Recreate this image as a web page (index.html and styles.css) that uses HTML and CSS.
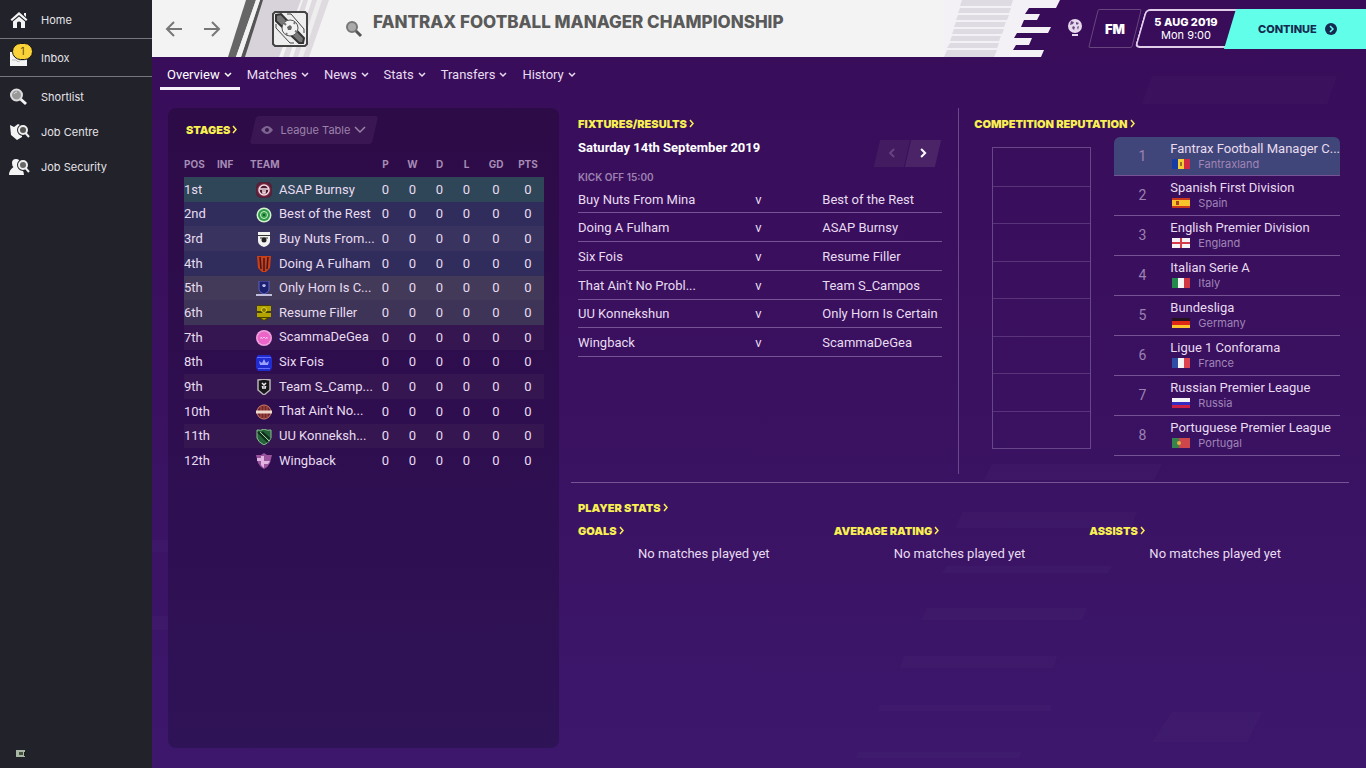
FILE: index.html
```
<!DOCTYPE html>
<html lang="en">
  <head>
    <meta charset="utf-8" />
    <meta name="viewport" content="width=device-width, initial-scale=1.0" />
    <title>Fantrax Football Manager Championship</title>
    <link rel="stylesheet" href="styles.css">
  </head>

  <body>
    <aside class="sidebar">
      <nav class="side-nav" aria-label="Main">
        <a class="side-item ruled" href="#">
          <svg width="20" height="18" viewBox="0 0 20 18" fill="#f4f4f4"><path d="M10 1L18.500 8.500L17 10L10 4L3 10L1.500 8.500ZM15 2h2v4l-2-2Z"/><path d="M4 10.500L10 5.500L16 10.500V17H12V11.500Q10 9.500 8 11.500V17H4Z"/></svg>
          <span>Home</span>
        </a>
        <a class="side-item ruled" href="#">
          <svg width="20" height="18" viewBox="0 0 20 18"><path d="M1 3h17v14H1Z" fill="#f4f4f4"/><path d="M3 11H7L9 13L12 11H16" stroke="#bbb" fill="none"/></svg>
          <b class="badge">1</b>
          <span>Inbox</span>
        </a>
        <a class="side-item" href="#">
          <svg width="20" height="18" viewBox="0 0 20 18"><path d="M11.500 11L17 16" stroke="#f4f4f4" stroke-width="3"/><circle cx="7.500" cy="7" r="5.500" fill="#999" stroke="#ddd" stroke-width="2"/><path d="M5 6Q6 4 8 4" stroke="#ddd" fill="none"/></svg>
          <span>Shortlist</span>
        </a>
        <a class="side-item" href="#">
          <svg width="22" height="18" viewBox="0 0 22 18"><path d="M1 2L5 4L9 1L13 3V14L8 17L2 12Z" fill="#f4f4f4"/><circle cx="14" cy="7" r="4" fill="#777" stroke="#22222b" stroke-width="4"/><circle cx="14" cy="7" r="4" fill="#555" stroke="#eee" stroke-width="2"/><path d="M16.500 10L20 14" stroke="#eee" stroke-width="2"/></svg>
          <span>Job Centre</span>
        </a>
        <a class="side-item" href="#">
          <svg width="22" height="18" viewBox="0 0 22 18"><path d="M3 5Q3 1 7 1Q11 1 11 5Q11 8 9 9Q15 11 15 17H0Q0 12 4.500 9Q3 8 3 5Z" fill="#f4f4f4"/><circle cx="14" cy="7" r="4" stroke="#22222b" stroke-width="4"/><circle cx="14" cy="7" r="4" fill="#666" stroke="#eee" stroke-width="2"/><path d="M16.500 10L20 14" stroke="#eee" stroke-width="2"/></svg>
          <span>Job Security</span>
        </a>
      </nav>
      <svg class="side-foot" width="10" height="8" viewBox="0 0 10 8"><rect width="9" height="7" fill="#a9b8a4"/><rect x="3" y="2" width="4" height="3" fill="#45523f"/><rect x="8" y="2" width="2" height="4" fill="#1c211b"/></svg>
    </aside>

    <div class="main">
      <svg class="backdrop" viewBox="0 0 1214 768" preserveAspectRatio="xMidYMid slice" aria-hidden="true">
        <g fill="#fff" fill-opacity=".02">
          <path d="M1000 76H1185L1175 104H990Z"/>
          <path d="M840 464H1010L1002 480H832ZM810 512H985L979 528H804ZM795 566H960L956 573H790ZM775 608H935L930 620H769ZM752 656H905L902 668H748ZM728 705H900L898 711H726ZM706 752H870L867 758H704Z"/>
          <path d="M1020 712H1110L1095 742H1000ZM0 540H120L116 552H0ZM0 616H102L98 630H0ZM240 720H330L322 736H232Z"/>
        </g>
      </svg>

      <header class="topbar">
        <div class="title-area">
          <button class="arrow" aria-label="Back"><svg width="18" height="18" viewBox="0 0 18 18"><path d="M9 2L2 9L9 16M2 9H17"/></svg></button>
          <button class="arrow" aria-label="Forward"><svg width="18" height="18" viewBox="0 0 18 18"><path d="M9 2L16 9L9 16M16 9H1"/></svg></button>
          <svg class="crest" width="110" height="57" viewBox="0 0 110 57">
            <path d="M33 0H75L53 57H13Z" fill="#d8d2db"/>
            <path d="M20 0H30L10 57H2Z" fill="#666"/>
            <path d="M34 0H37L19 57H15Z" fill="#555"/>
            <path d="M30 0H34L15 57H10Z" fill="#f2f2f2"/>
            <path d="M77 0H82L63 57H57ZM86 0H103L83 57H67Z" fill="#dedadf"/>
            <path d="M91 0H96L77 57H72Z" fill="#efeeef"/>
            <path d="M49 12H79L81 14V44L79 46H49L47 44V14Z" fill="#eee" stroke="#444" stroke-width="2"/>
            <path d="M50 15L55 14L78 38L77 43L73 43L50 21Z" fill="#777" stroke="#333" stroke-width="2"/>
            <path d="M50 24V28L64 43H68M61 14H65L78 29V33" fill="none" stroke="#444" stroke-width="1"/>
            <circle cx="64" cy="28" r="8" fill="#f2f2f2" stroke="#555" stroke-width="1"/>
            <path d="M64 25L66 27L65 30H62L61 27Z" fill="#666"/>
            <path d="M58 23L60 25M69 22L68 24M71 32L69 31M60 35L61 33" stroke="#777" stroke-width="2"/>
          </svg>
          <svg class="find" width="18" height="18" viewBox="0 0 18 18"><path d="M10.500 10.500L16 16" stroke="#555" stroke-width="3"/><circle cx="7" cy="7" r="5" fill="#aaa" stroke="#777" stroke-width="2"/></svg>
          <h1>FANTRAX FOOTBALL MANAGER CHAMPIONSHIP</h1>
        </div>
        <svg class="edge" width="118" height="57" viewBox="0 0 118 57">
          <path d="M0 0H116L112 8H85L81 14H96L93 20H80L77 27H107L104 33H73L70 38H88L85 45H72L69 50H100L97 57H0Z" fill="#f3f1f5"/>
          <path d="M18 0H69L67 6H16ZM16 8H67L65 13H14ZM14 15H65L63 20H12ZM12 22H62L60 27H10ZM10 29H60L58 34H8ZM8 36H57L55 41H6ZM6 43H55L53 48H3ZM3 50H53L50 57H0Z" fill="#dedce2"/>
        </svg>
        <div class="controls">
          <button class="world" aria-label="World"><svg width="16" height="18" viewBox="0 0 16 18"><circle cx="8" cy="8" r="7" fill="#e6d9ec"/><path d="M4 3L7 4L6 6L3 7ZM9 4L12 5L10 7L9 6ZM6 8L8 9L7 12L5 10ZM10 9L12 8L11 12Z" fill="#6b4885"/><path d="M5 17H11" stroke="#e6d9ec" stroke-width="2"/></svg></button>
          <button class="fm">FM</button>
          <button class="date"><b>5 AUG 2019</b><span>Mon 9:00</span></button>
          <button class="continue">CONTINUE <svg width="12" height="12" viewBox="0 0 12 12"><circle cx="6" cy="6" r="6" fill="#152a50"/><path d="M5 3L8 6L5 9" fill="none" stroke="#61ffea" stroke-width="1.500"/></svg></button>
        </div>
      </header>

      <nav class="tabs" aria-label="Competition">
        <a class="tab active" href="#">Overview <svg width="8" height="6" viewBox="0 0 8 6"><path d="M1 1L4 4L7 1"/></svg></a>
        <a class="tab" href="#">Matches <svg width="8" height="6" viewBox="0 0 8 6"><path d="M1 1L4 4L7 1"/></svg></a>
        <a class="tab" href="#">News <svg width="8" height="6" viewBox="0 0 8 6"><path d="M1 1L4 4L7 1"/></svg></a>
        <a class="tab" href="#">Stats <svg width="8" height="6" viewBox="0 0 8 6"><path d="M1 1L4 4L7 1"/></svg></a>
        <a class="tab" href="#">Transfers <svg width="8" height="6" viewBox="0 0 8 6"><path d="M1 1L4 4L7 1"/></svg></a>
        <a class="tab" href="#">History <svg width="8" height="6" viewBox="0 0 8 6"><path d="M1 1L4 4L7 1"/></svg></a>
      </nav>

      <main class="content">
        <section class="stages">
          <div class="stages-head">
            <h2><a href="#">STAGES<svg width="6" height="9" viewBox="0 0 6 9"><path d="M1 1L4 4.500L1 8"/></svg></a></h2>
            <div class="view-select">
              <svg class="eye" width="12" height="8" viewBox="0 0 12 8"><path d="M0 4Q6 -4 12 4Q6 12 0 4Z" fill="#7f6592"/><circle cx="6" cy="4" r="2" fill="#3a1753"/></svg>
              <select aria-label="View"><option>League Table</option></select>
              <svg class="caret" width="12" height="8" viewBox="0 0 12 8"><path d="M1 1L6 6L11 1"/></svg>
            </div>
          </div>

          <table class="league">
            <colgroup><col class="c-pos"><col class="c-inf"><col class="c-team"><col class="c-num"><col class="c-num"><col class="c-num"><col class="c-num"><col class="c-gd"><col class="c-gd"></colgroup>
            <thead>
              <tr><th>POS</th><th>INF</th><th>TEAM</th><th class="num">P</th><th class="num">W</th><th class="num">D</th><th class="num">L</th><th class="num">GD</th><th class="num">PTS</th></tr>
            </thead>
            <tbody>
              <tr class="champ"><td>1st</td><td></td><td class="team"><svg viewBox="0 0 16 16"><rect width="16" height="16" rx="5" fill="#54213b"/><circle cx="8" cy="8" r="7" fill="#79263f"/><circle cx="8" cy="8" r="5" fill="#4a1d35" stroke="#f5dfe6" stroke-width="1.500"/><path d="M4 7H12M7 8V11H9V8" stroke="#f5dfe6" fill="none" stroke-width="1.500"/></svg>ASAP Burnsy</td><td class="num">0</td><td class="num">0</td><td class="num">0</td><td class="num">0</td><td class="num">0</td><td class="num">0</td></tr>
              <tr class="promo"><td>2nd</td><td></td><td class="team"><svg viewBox="0 0 16 16"><circle cx="8" cy="8" r="7.500" fill="#d5f2d0"/><circle cx="8" cy="8" r="6" fill="#2f9a48"/><circle cx="8" cy="8" r="3.500" fill="#319b49" stroke="#c8f0c5"/><circle cx="8" cy="8" r="1" fill="#134d25"/></svg>Best of the Rest</td><td class="num">0</td><td class="num">0</td><td class="num">0</td><td class="num">0</td><td class="num">0</td><td class="num">0</td></tr>
              <tr class="promo alt"><td>3rd</td><td></td><td class="team"><svg viewBox="0 0 16 16"><path d="M2 1H14V4H2ZM2 5H14V10Q14 14 8 16Q2 14 2 10Z" fill="#f4f2f0"/><path d="M1 4.500H15M4 7H12" stroke="#333"/><circle cx="8" cy="9" r="2.500" fill="#242225"/></svg>Buy Nuts From...</td><td class="num">0</td><td class="num">0</td><td class="num">0</td><td class="num">0</td><td class="num">0</td><td class="num">0</td></tr>
              <tr class="promo"><td>4th</td><td></td><td class="team"><svg viewBox="0 0 16 16"><path d="M1 0H15L14 12L10 16H6L2 12Z" fill="#c93f16"/><path d="M4 1L5 13M8 2V15M12 1L11 13" stroke="#421522" stroke-width="1.500"/></svg>Doing A Fulham</td><td class="num">0</td><td class="num">0</td><td class="num">0</td><td class="num">0</td><td class="num">0</td><td class="num">0</td></tr>
              <tr class="playoff"><td>5th</td><td></td><td class="team"><svg viewBox="0 0 16 16"><path d="M3 0H13V9Q12 12 8 13Q4 12 3 9Z" fill="#1d206f" stroke="#5b60bd"/><path d="M6 4L8 3L10 4L9 6H7Z" fill="#b8baf0"/><path d="M0 13H16V15H0Z" fill="#c0bedc"/></svg>Only Horn Is C...</td><td class="num">0</td><td class="num">0</td><td class="num">0</td><td class="num">0</td><td class="num">0</td><td class="num">0</td></tr>
              <tr class="playoff alt"><td>6th</td><td></td><td class="team"><svg viewBox="0 0 16 16"><path d="M1 0H15V12L8 16L1 12Z" fill="#494100"/><path d="M1 1H15V6H1ZM1 8H15V12H1ZM5 13H11L8 15Z" fill="#b3a400"/><circle cx="8" cy="5" r="2.500" fill="#817600" stroke="#e0d22a"/></svg>Resume Filler</td><td class="num">0</td><td class="num">0</td><td class="num">0</td><td class="num">0</td><td class="num">0</td><td class="num">0</td></tr>
              <tr class="alt"><td>7th</td><td></td><td class="team"><svg viewBox="0 0 16 16"><circle cx="8" cy="8" r="8" fill="#f1a2df"/><circle cx="8" cy="8" r="6.500" fill="#ec65c8"/><path d="M5 9V7L6.500 8.500L8 7L9.500 8.500L11 7V9" fill="none" stroke="#f8bdea"/></svg>ScammaDeGea</td><td class="num">0</td><td class="num">0</td><td class="num">0</td><td class="num">0</td><td class="num">0</td><td class="num">0</td></tr>
              <tr><td>8th</td><td></td><td class="team"><svg viewBox="0 0 16 16"><path d="M2 0H14L16 3V13L14 16H2L0 13V3Z" fill="#202bd0"/><path d="M1 2.500H15M2 13.500H14" stroke="#6770ff"/><path d="M3 6L6 8L8 4L10 8L13 6L12 10H4Z" fill="#9ba1ff"/></svg>Six Fois</td><td class="num">0</td><td class="num">0</td><td class="num">0</td><td class="num">0</td><td class="num">0</td><td class="num">0</td></tr>
              <tr class="alt"><td>9th</td><td></td><td class="team"><svg viewBox="0 0 16 16"><path d="M2 1L8 0L14 1V11L8 16L2 11Z" fill="#171719" stroke="#b8b4b8" stroke-width="1.500"/><path d="M6 4L10 8M10 4L6 8M6 9H10" stroke="#eee" stroke-width="1.500"/></svg>Team S_Camp...</td><td class="num">0</td><td class="num">0</td><td class="num">0</td><td class="num">0</td><td class="num">0</td><td class="num">0</td></tr>
              <tr><td>10th</td><td></td><td class="team"><svg viewBox="0 0 16 16"><circle cx="8" cy="8" r="7" fill="#6e2532" stroke="#d38465"/><path d="M5 2V14M8 1V15M11 2V14" stroke="#b5573c"/><path d="M0 6.500H16V9.500H0Z" fill="#efd9cc"/></svg>That Ain't No...</td><td class="num">0</td><td class="num">0</td><td class="num">0</td><td class="num">0</td><td class="num">0</td><td class="num">0</td></tr>
              <tr class="alt"><td>11th</td><td></td><td class="team"><svg viewBox="0 0 16 16"><path d="M1 1Q5 2 8 0Q11 2 15 1V9Q14 13 8 16Q2 13 1 9Z" fill="#256338" stroke="#8abf92"/><path d="M2 3L12 13M6 3L14 10" stroke="#102c1c" stroke-width="2"/><path d="M4 3L13 12" stroke="#9fce9f"/></svg>UU Konneksh...</td><td class="num">0</td><td class="num">0</td><td class="num">0</td><td class="num">0</td><td class="num">0</td><td class="num">0</td></tr>
              <tr><td>12th</td><td></td><td class="team"><svg viewBox="0 0 16 16"><path d="M0 2H5L8 0L11 2H16L14 10Q12 14 8 16Q4 14 2 10Z" fill="#9b529d"/><path d="M5 3H8V8H14L12 11H8V15L5 12V8H1V5H5Z" fill="#e0b5e2"/></svg>Wingback</td><td class="num">0</td><td class="num">0</td><td class="num">0</td><td class="num">0</td><td class="num">0</td><td class="num">0</td></tr>
            </tbody>
          </table>
        </section>

        <div class="right">
          <div class="upper">
            <section class="fixtures">
              <h2><a href="#">FIXTURES/RESULTS<svg width="6" height="9" viewBox="0 0 6 9"><path d="M1 1L4 4.500L1 8"/></svg></a></h2>
              <div class="day">
                <h3>Saturday 14th September 2019</h3>
                <div class="pager">
                  <button disabled aria-label="Previous"><svg width="8" height="10" viewBox="0 0 8 10"><path d="M6 1L2 5L6 9"/></svg></button>
                  <button aria-label="Next"><svg width="8" height="10" viewBox="0 0 8 10"><path d="M2 1L6 5L2 9"/></svg></button>
                </div>
              </div>
              <p class="kickoff">KICK OFF 15:00</p>
              <table class="games">
                <tr><td>Buy Nuts From Mina</td><td class="v">v</td><td>Best of the Rest</td></tr>
                <tr><td>Doing A Fulham</td><td class="v">v</td><td>ASAP Burnsy</td></tr>
                <tr><td>Six Fois</td><td class="v">v</td><td>Resume Filler</td></tr>
                <tr><td>That Ain't No Probl...</td><td class="v">v</td><td>Team S_Campos</td></tr>
                <tr><td>UU Konnekshun</td><td class="v">v</td><td>Only Horn Is Certain</td></tr>
                <tr><td>Wingback</td><td class="v">v</td><td>ScammaDeGea</td></tr>
              </table>
            </section>

            <section class="reputation">
              <h2><a href="#">COMPETITION REPUTATION<svg width="6" height="9" viewBox="0 0 6 9"><path d="M1 1L4 4.500L1 8"/></svg></a></h2>
              <div class="rep-body">
                <div class="ladder"><i></i><i></i><i></i><i></i><i></i><i></i><i></i><i></i></div>
                <ol class="ranks">
                  <li class="current"><span class="rank">1</span><div><b>Fantrax Football Manager C...</b><small><svg viewBox="0 0 18 10"><path d="M0 0H6V10H0Z" fill="#173ca4"/><path d="M6 0H12V10H6Z" fill="#f3cf31"/><path d="M12 0H18V10H12Z" fill="#cf2943"/><path d="M8 3H10V7H8Z" fill="#9a6b35"/></svg>Fantraxland</small></div></li>
                  <li><span class="rank">2</span><div><b>Spanish First Division</b><small><svg viewBox="0 0 18 10"><path d="M0 0H18V10H0Z" fill="#c9381b"/><path d="M0 2H18V8H0Z" fill="#fbc32b"/><path d="M4 3H7V7H4Z" fill="#a8431f"/></svg>Spain</small></div></li>
                  <li><span class="rank">3</span><div><b>English Premier Division</b><small><svg viewBox="0 0 18 10"><path d="M0 0H18V10H0Z" fill="#f5f2f5"/><path d="M9 0V10M0 5H18" stroke="#d33b48" stroke-width="2"/></svg>England</small></div></li>
                  <li><span class="rank">4</span><div><b>Italian Serie A</b><small><svg viewBox="0 0 18 10"><path d="M0 0H6V10H0Z" fill="#248a4d"/><path d="M6 0H12V10H6Z" fill="#f4f4f4"/><path d="M12 0H18V10H12Z" fill="#d03643"/></svg>Italy</small></div></li>
                  <li><span class="rank">5</span><div><b>Bundesliga</b><small><svg viewBox="0 0 18 10"><path d="M0 0H18V3H0Z" fill="#25121f"/><path d="M0 3H18V7H0Z" fill="#dd2915"/><path d="M0 7H18V10H0Z" fill="#ffc52c"/></svg>Germany</small></div></li>
                  <li><span class="rank">6</span><div><b>Ligue 1 Conforama</b><small><svg viewBox="0 0 18 10"><path d="M0 0H6V10H0Z" fill="#2d4ea4"/><path d="M6 0H12V10H6Z" fill="#f4f4f4"/><path d="M12 0H18V10H12Z" fill="#dd4450"/></svg>France</small></div></li>
                  <li><span class="rank">7</span><div><b>Russian Premier League</b><small><svg viewBox="0 0 18 10"><path d="M0 0H18V4H0Z" fill="#f4f4f4"/><path d="M0 4H18V7H0Z" fill="#342bc3"/><path d="M0 7H18V10H0Z" fill="#cb1f45"/></svg>Russia</small></div></li>
                  <li><span class="rank">8</span><div><b>Portuguese Premier League</b><small><svg viewBox="0 0 18 10"><path d="M0 0H7V10H0Z" fill="#36834c"/><path d="M7 0H18V10H7Z" fill="#cc464c"/><circle cx="7" cy="5" r="2" fill="#e0b044"/></svg>Portugal</small></div></li>
                </ol>
              </div>
            </section>
          </div>

          <section class="stats">
            <h2><a href="#">PLAYER STATS<svg width="6" height="9" viewBox="0 0 6 9"><path d="M1 1L4 4.500L1 8"/></svg></a></h2>
            <div class="stat-grid">
              <div><h2><a href="#">GOALS<svg width="6" height="9" viewBox="0 0 6 9"><path d="M1 1L4 4.500L1 8"/></svg></a></h2><p>No matches played yet</p></div>
              <div><h2><a href="#">AVERAGE RATING<svg width="6" height="9" viewBox="0 0 6 9"><path d="M1 1L4 4.500L1 8"/></svg></a></h2><p>No matches played yet</p></div>
              <div><h2><a href="#">ASSISTS<svg width="6" height="9" viewBox="0 0 6 9"><path d="M1 1L4 4.500L1 8"/></svg></a></h2><p>No matches played yet</p></div>
            </div>
          </section>
        </div>
      </main>
    </div>
  </body>
</html>
```
FILE: styles.css
```
* {
  box-sizing: border-box;
}
body {
  margin: 0;
  min-height: 100vh;
  display: flex;
  background: #3a1162;
  color: #e8dcf0;
  font: 13px/16px Roboto, "Liberation Sans", sans-serif;
}
h1, h2, h3, p, ol {
  margin: 0;
  padding: 0;
}
a {
  color: inherit;
  text-decoration: none;
}
button, select {
  margin: 0;
  padding: 0;
  border: 0;
  background: none;
  color: inherit;
  font: inherit;
}
svg {
  flex: none;
}

/* sidebar */
.sidebar {
  flex: none;
  width: 152px;
  display: flex;
  flex-direction: column;
  justify-content: space-between;
  background: #22222b;
  color: #e4e4e8;
  font: 11px/16px Inter, "Liberation Sans", sans-serif;
}
.side-nav {
  padding-top: 1px;
}
.side-item {
  position: relative;
  height: 35px;
  padding-left: 9px;
  display: flex;
  align-items: center;
}
.side-item svg {
  margin-right: auto;
}
.side-item span {
  width: 111px;
}
.side-item.ruled {
  height: 38px;
  padding-top: 1px;
  border-bottom: 1px solid #777780;
}
.side-item.ruled + .side-item:not(.ruled) {
  margin-top: 2px;
}
.badge {
  position: absolute;
  left: 12px;
  top: 4px;
  width: 21px;
  height: 17px;
  border: 1px solid #151518;
  border-radius: 9px;
  background: #fbd238;
  color: #5b4a15;
  font-size: 10px;
  line-height: 15px;
  font-weight: 400;
  text-align: center;
}
.side-foot {
  margin: 0 0 10px 16px;
}

/* main area */
.main {
  position: relative;
  z-index: 0;
  flex: 1;
  min-width: 0;
  display: flex;
  flex-direction: column;
  background: linear-gradient(#380c59, #3a1160 50%, #3c176c);
}
.backdrop {
  position: absolute;
  inset: 0;
  z-index: -1;
  width: 100%;
  height: 100%;
}

.topbar {
  height: 57px;
  display: flex;
}
.title-area {
  flex: 1;
  min-width: 0;
  padding-left: 13px;
  display: flex;
  align-items: center;
  background: #f3f3f3;
  color: #5a5a5a;
}
.arrow {
  width: 18px;
  height: 18px;
  margin-right: 20px;
}
.arrow + .arrow {
  margin-right: 5px;
}
.arrow path {
  fill: none;
  stroke: #777;
  stroke-width: 2;
}
.find {
  margin: 0 10px 0 9px;
}
h1 {
  padding-bottom: 14px;
  font: 800 17px/20px Inter, sans-serif;
  white-space: nowrap;
}
.controls {
  flex: none;
  width: 304px;
  padding-top: 9px;
  display: flex;
  align-items: flex-start;
  color: #fff;
  font-family: Inter, sans-serif;
}
.world {
  width: 16px;
  height: 38px;
  margin: 0 10px 0 5px;
}
.fm {
  position: relative;
  width: 44px;
  height: 39px;
  font-weight: 900;
}
.fm::before,
.date::before {
  content: "";
  position: absolute;
  inset: 0;
  border: 1px solid #67477d;
  border-radius: 2px;
  transform: skewX(-14deg);
}
.date {
  position: relative;
  width: 92px;
  height: 39px;
  margin-left: 3px;
  line-height: 13px;
  font-size: 11px;
}
.date::before {
  border: 2px solid #e0cdea;
  border-right: 0;
  border-radius: 5px 0 0 5px;
  transform: skewX(-16deg);
}
.date b {
  display: block;
  font-weight: 800;
}
.continue {
  position: relative;
  flex: 1;
  height: 40px;
  margin-left: -8px;
  padding-left: 34px;
  background: #61ffea;
  clip-path: polygon(12px 0, 100% 0, 100% 100%, 0 100%);
  color: #152a50;
  font-size: 11px;
  font-weight: 800;
  display: flex;
  align-items: center;
  gap: 8px;
}

.tabs {
  padding-left: 8px;
  height: 33px;
  display: flex;
}
.tab {
  padding: 5px 8px 0 7px;
  display: flex;
  align-items: center;
  gap: 4px;
  border-bottom: 3px solid transparent;
}
.tab.active {
  border-color: #f6eefa;
  color: #fff;
}
.tab path,
.caret path,
h2 path,
.pager path {
  fill: none;
  stroke: currentColor;
  stroke-width: 2;
}
.tab path {
  stroke-width: 1.5;
}

.content {
  flex: 1;
  padding: 18px 17px 20px 16px;
  display: grid;
  grid-template-columns: 389fr 780fr;
  gap: 12px;
}
h2 {
  font: 900 11px/16px Inter, sans-serif;
  color: #f8ef52;
  white-space: nowrap;
}
h2 svg {
  margin-left: 2px;
}
h2 path {
  stroke-width: 1.5;
}

/* league table */
.stages {
  position: relative;
  z-index: 0;
  padding: 8px 15px 8px 16px;
  border-radius: 8px;
  background: linear-gradient(#2d0b47, #2e0e4f 50%, #2f1357);
}
.stages-head {
  display: flex;
  align-items: center;
  gap: 15px;
  padding-left: 2px;
}
.view-select {
  position: relative;
  width: 122px;
  height: 28px;
  padding: 0 9px 0 8px;
  display: flex;
  align-items: center;
  color: #9a82aa;
}
.view-select::before {
  content: "";
  position: absolute;
  inset: 0;
  z-index: -1;
  border-radius: 3px;
  background: #3a1753;
  transform: skewX(-13deg);
}
.view-select select {
  appearance: none;
  width: 80px;
  padding-left: 7px;
  outline: 0;
  font: 11px/16px Inter, sans-serif;
}
.caret {
  margin-left: auto;
}
.caret path {
  stroke-width: 1.5;
}
.league,
.games {
  width: 100%;
  border-collapse: collapse;
  table-layout: fixed;
  white-space: nowrap;
}
.league {
  height: 324px;
  margin-top: 5px;
}
.league td, .league th {
  padding: 1px 0 0;
  text-align: left;
}
.league th {
  height: 28px;
  padding-top: 7px;
  vertical-align: top;
  font: 700 10px/16px Inter, sans-serif;
  color: #a68bb5;
}
.league .num {
  text-align: center;
}
.c-pos, .c-inf {
  width: 33px;
}
.c-team {
  width: 122px;
}
.c-num {
  width: 27px;
}
.c-gd {
  width: 32px;
}
.team svg {
  width: 16px;
  height: 16px;
  margin: 0 7px 0 6px;
  vertical-align: middle;
}
.champ {
  background: #2f4558;
}
.promo {
  background: #302d5c;
}
.alt {
  background: #351651;
}
.promo.alt {
  background: #39345f;
}
.playoff {
  background: #433a5a;
}
.playoff.alt {
  background: #3d3457;
}

/* fixtures and reputation */
.right {
  min-width: 0;
}
.upper {
  height: 366px;
  display: grid;
  grid-template-columns: 389fr 391fr;
}
.fixtures {
  padding: 8px 16px 0 7px;
}
.day {
  height: 37px;
  display: flex;
  justify-content: space-between;
  align-items: flex-start;
}
h3 {
  padding-top: 8px;
  font: 700 13px/16px Roboto, sans-serif;
  color: #fff;
}
.pager {
  display: flex;
  gap: 1px;
  margin: 8px 4px 0 0;
}
.pager button {
  width: 30px;
  height: 27px;
  background: #4b2468;
  transform: skewX(-13deg);
  color: #fff;
}
.pager button:disabled {
  background: #431b60;
  color: #674180;
}
.pager svg {
  transform: skewX(13deg);
}
.kickoff {
  font: 600 10px/16px Inter, sans-serif;
  color: #9e82b2;
}
.games {
  height: 172px;
}
.games td {
  padding: 2px 0 0;
  border-bottom: 1px solid #765394;
}
.games td:last-child {
  width: 120px;
}
.games .v {
  width: 128px;
  text-align: center;
}
.reputation {
  padding: 8px 9px 0 15px;
  border-left: 1px solid #6b488a;
}
.rep-body {
  display: grid;
  grid-template-columns: 99px 1fr;
  gap: 23px;
  padding: 5px 0 0 18px;
}
.ladder {
  height: 302px;
  margin-top: 10px;
  display: grid;
  grid-template-rows: repeat(8, 1fr);
  border: 1px solid #69458a;
}
.ladder i + i {
  border-top: 1px solid #59347b;
}
.ranks {
  list-style: none;
}
.ranks li {
  height: 40px;
  border-bottom: 1px solid #765394;
  display: flex;
}
.ranks .current {
  height: 39px;
  border-radius: 6px 6px 0 0;
  background: #404679;
}
.rank {
  width: 56px;
  padding-top: 11px;
  text-align: center;
  font-size: 14px;
  color: #9c82b2;
}
.ranks b {
  display: block;
  padding-top: 4px;
  font-weight: 400;
  line-height: 15px;
  white-space: nowrap;
}
.ranks small {
  display: flex;
  align-items: center;
  font: 11px/16px Inter, sans-serif;
  color: #a085b8;
}
.ranks small svg {
  width: 18px;
  height: 10px;
  margin: 0 8px 0 2px;
}
.stats {
  margin-top: 8px;
  padding: 17px 8px 0 7px;
  border-top: 1px solid #765394;
}
.stat-grid {
  display: grid;
  grid-template-columns: repeat(3, 1fr);
  gap: 4px;
  padding-top: 7px;
}
.stat-grid p {
  padding-top: 7px;
  text-align: center;
}
```
